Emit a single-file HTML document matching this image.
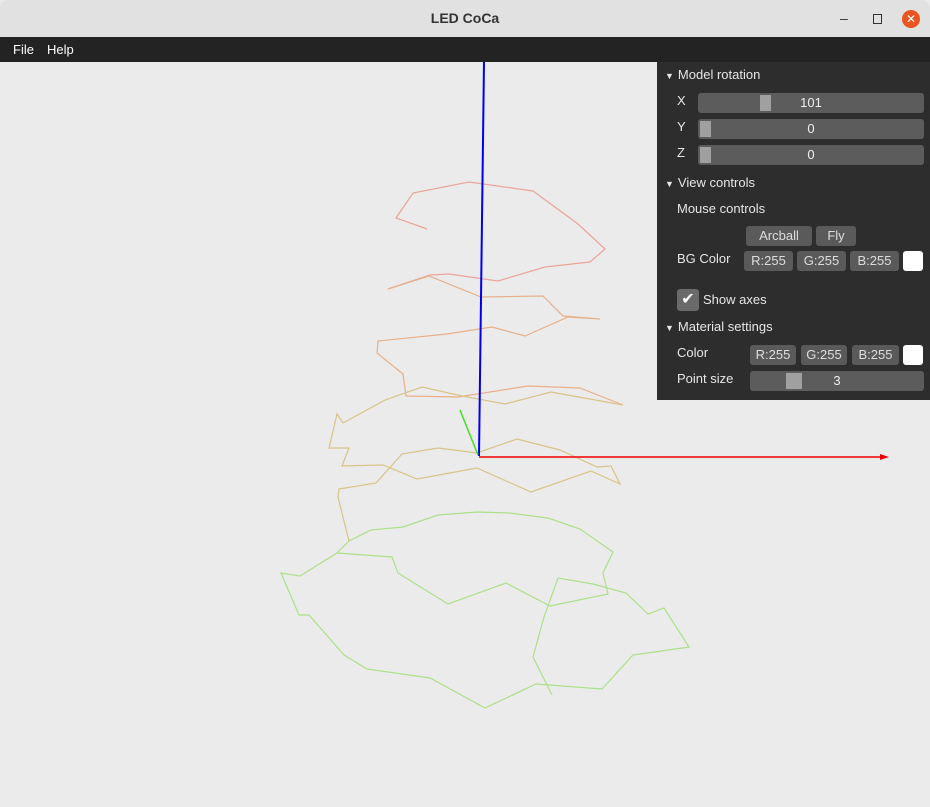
<!DOCTYPE html>
<html><head><style>
body{margin:0;width:930px;height:807px;overflow:hidden;background:#ebebeb;font-family:"Liberation Sans",sans-serif;position:relative}
.title{position:absolute;left:0;top:0;width:930px;height:37px;background:#e1e1e1;border-radius:8px 8px 0 0;text-align:center;line-height:37px;font-weight:bold;font-size:14px;color:#333}
.menu{position:absolute;left:0;top:37px;width:930px;height:25px;background:#232323;color:#fff;font-size:13px;line-height:25px}
.menu span{margin-left:13px}
.panel{position:absolute;left:657px;top:62px;width:273px;height:338px;background:#2d2d2d;color:#e6e6e6;font-size:13px}
.a{position:absolute}
.sl{position:absolute;left:41px;width:226px;height:20px;background:#5c5c5c;border-radius:3px;text-align:center;line-height:20px;color:#eee}
.kn{position:absolute;top:2px;width:11px;height:16px;background:#a0a0a0}
.bt{position:absolute;height:20px;background:#5a5a5a;border-radius:3px;text-align:center;line-height:20px;color:#ddd}
.sw{position:absolute;width:20px;height:20px;background:#fff;border-radius:3px}
.tri{font-size:9px;margin-right:4px}
</style></head><body>
<div class="title">LED CoCa
<span style="position:absolute;left:840px;top:0;font-weight:normal;color:#333">–</span>
<span style="position:absolute;left:873px;top:14px;width:7px;height:8px;border:1px solid #333"></span>
<span style="position:absolute;left:902px;top:10px;width:18px;height:18px;border-radius:50%;background:#e95420;color:#fff;line-height:18px;font-size:12px;font-weight:normal">✕</span>
</div>
<div class="menu"><span>File</span><span>Help</span></div>
<svg style="position:absolute;left:0;top:62px" width="930" height="745" viewBox="0 62 930 745">
<g fill="none" stroke-width="1.2">
<polyline stroke="#eaa59a" points="427,229 396,218 413,193 469,182 533,191 578,224 605,249 590,262 545,267 498,281 449,274 430,275 388,289"/>
<polyline stroke="#e8b08a" points="388,289 429,276 481,297 543,296 563,316 600,319 568,317 525,336 492,327 447,334 378,341 377,353 403,374 406,396 458,397 528,386 580,388 623,405"/>
<polyline stroke="#d8c488" points="623,405 551,392 505,404 462,396 422,387 385,400 343,423 337,414 329,448 349,448 342,466 383,465 417,479 477,468 531,492 591,471 620,484 611,466 597,467 560,450 517,439 477,453 438,448 402,454 376,483 339,489 338,497 349,541"/>
<polyline stroke="#ade08a" points="337,553 392,557 398,573 448,604 506,583 550,606 608,594 603,573 613,552 580,529 548,518 509,513 477,512 438,515 403,527 371,530 349,541 337,553 300,576 281,573 299,615 309,615 344,655 367,669 430,678 485,708 536,684 602,689 633,655 689,647 664,608 648,614 626,593 593,584 558,578 544,617 533,657 552,695"/>
</g>
<line x1="484" y1="62" x2="479" y2="456" stroke="#0000ee" stroke-width="2"/>
<line x1="479" y1="457" x2="885" y2="457" stroke="#ee0000" stroke-width="1.5"/>
<polygon points="880,454 889,457 880,460" fill="#ee0000"/>
<line x1="460" y1="410" x2="478" y2="455" stroke="#44dd22" stroke-width="1.5"/>
</svg>
<div class="panel">
<div class="a" style="left:8px;top:5px"><span class="tri">▼</span>Model rotation</div>
<div class="a" style="left:20px;top:31px">X</div>
<div class="sl" style="top:31px"><div class="kn" style="left:62px"></div>101</div>
<div class="a" style="left:20px;top:57px">Y</div>
<div class="sl" style="top:57px"><div class="kn" style="left:2px"></div>0</div>
<div class="a" style="left:20px;top:83px">Z</div>
<div class="sl" style="top:83px"><div class="kn" style="left:2px"></div>0</div>
<div class="a" style="left:8px;top:113px"><span class="tri">▼</span>View controls</div>
<div class="a" style="left:20px;top:139px">Mouse controls</div>
<div class="bt" style="left:89px;top:164px;width:66px">Arcball</div>
<div class="bt" style="left:159px;top:164px;width:40px">Fly</div>
<div class="a" style="left:20px;top:189px">BG Color</div>
<div class="bt" style="left:87px;top:189px;width:49px">R:255</div>
<div class="bt" style="left:140px;top:189px;width:49px">G:255</div>
<div class="bt" style="left:193px;top:189px;width:49px">B:255</div>
<div class="sw" style="left:246px;top:189px"></div>
<div class="a" style="left:20px;top:227px;width:22px;height:22px;background:#6a6a6a;border-radius:3px;color:#fff;text-align:center;line-height:22px;font-size:16px">✔</div>
<div class="a" style="left:46px;top:230px">Show axes</div>
<div class="a" style="left:8px;top:257px"><span class="tri">▼</span>Material settings</div>
<div class="a" style="left:20px;top:283px">Color</div>
<div class="bt" style="left:93px;top:283px;width:46px">R:255</div>
<div class="bt" style="left:144px;top:283px;width:46px">G:255</div>
<div class="bt" style="left:195px;top:283px;width:47px">B:255</div>
<div class="sw" style="left:246px;top:283px"></div>
<div class="a" style="left:20px;top:309px">Point size</div>
<div class="sl" style="top:309px;left:93px;width:174px"><div class="kn" style="left:36px;width:16px"></div>3</div>
</div>
</body></html>
